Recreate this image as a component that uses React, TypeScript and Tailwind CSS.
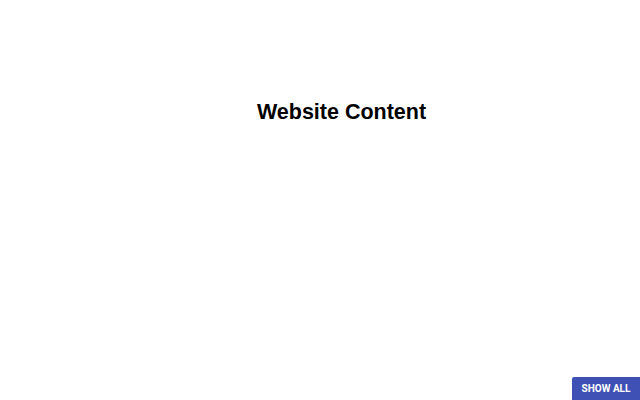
export default function App() {
  return (
    <div className="relative h-[400px] w-[640px] overflow-hidden bg-white font-['Liberation_Sans',Arial,sans-serif]">
      <div className="flex justify-center pl-[43px] pt-[99px]">
        <h1 className="text-[21.5px] font-bold leading-[26px] text-black">Website Content</h1>
      </div>
      <button className="fixed bottom-0 right-0 flex h-[23px] w-[68px] items-center justify-center rounded-tl-[2px] bg-[#3f51b5] font-['Roboto',sans-serif] text-[10px] font-bold text-white">
        SHOW ALL
      </button>
    </div>
  );
}
